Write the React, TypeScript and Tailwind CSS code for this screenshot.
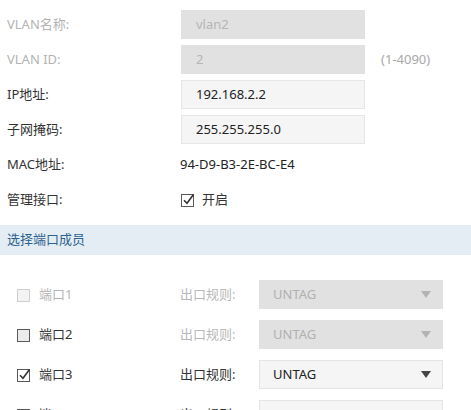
import React from 'react';

const font = { fontFamily: '"Noto Sans", "Noto Sans CJK SC", sans-serif' };

function Field({ label, value, disabled, hint }: { label: string; value: string; disabled?: boolean; hint?: string }) {
  return (
    <div className="flex items-center h-[29px]">
      <span className={`w-[181px] pl-[7px] ${disabled ? 'text-[#b3b3b3]' : 'text-[#333]'}`}>{label}</span>
      <div
        className={`w-[184px] h-[29px] flex items-center pl-[14px] border ${
          disabled ? 'bg-[#e1e1e1] border-[#e1e1e1] text-[#b5b5b5]' : 'bg-[#f5f5f5] border-[#e6e6e6] text-[#222]'
        }`}
      >
        {value}
      </div>
      {hint && <span className="ml-[16px] text-[#a8a8a8]">{hint}</span>}
    </div>
  );
}

function Box({ state }: { state: 'disabled' | 'off' | 'on' | 'full' }) {
  if (state === 'full') {
    return <span className="block w-[13px] h-[13px] mt-[1px] bg-[#666] border border-[#555]" />;
  }
  const stroke = state === 'disabled' ? '#cfcfcf' : '#5a5a5a';
  const fill = state === 'on' ? '#fff' : state === 'off' ? '#ececec' : '#f3f3f3';
  return (
    <svg width="14" height="14" viewBox="0 0 14 14" className="block">
      <rect x="0.5" y="1.5" width="12" height="12" fill={fill} stroke={stroke} />
      {state === 'on' && <path d="M3 7.2 L6 10.2 L12.5 1.5" fill="none" stroke="#333" strokeWidth="1.6" />}
    </svg>
  );
}

function Port({ name, state }: { name: string; state: 'disabled' | 'off' | 'on' | 'full' }) {
  const dis = state === 'disabled' || state === 'off';
  return (
    <div className="flex items-center h-[29px]">
      <div className="w-[180px] pl-[17px] flex items-center">
        <Box state={state} />
        <span className={`ml-[8px] ${state === 'disabled' ? 'text-[#b5b5b5]' : 'text-[#333]'}`}>{name}</span>
      </div>
      <span className={`w-[79px] ${dis ? 'text-[#b8b8b8]' : 'text-[#333]'}`}>出口规则:</span>
      <div
        className={`w-[184px] h-[29px] flex items-center justify-between pl-[13px] pr-[11px] border ${
          dis ? 'bg-[#e1e1e1] border-[#e1e1e1] text-[#b0b0b0]' : 'bg-[#f5f5f5] border-[#e4e4e4] text-[#222]'
        }`}
      >
        <span>UNTAG</span>
        <svg width="10" height="7" viewBox="0 0 10 7">
          <path d="M0 0 L10 0 L5 7 Z" fill={dis ? '#b3b3b3' : '#444'} />
        </svg>
      </div>
    </div>
  );
}

export default function App() {
  return (
    <div className="w-[471px] h-[410px] overflow-hidden bg-white text-[13px]" style={font}>
      <div className="pt-[10px] flex flex-col gap-[6px]">
        <Field label="VLAN名称:" value="vlan2" disabled />
        <Field label="VLAN ID:" value="2" disabled hint="(1-4090)" />
        <Field label="IP地址:" value="192.168.2.2" />
        <Field label="子网掩码:" value="255.255.255.0" />
        <div className="flex items-center h-[29px]">
          <span className="w-[180px] pl-[7px] text-[#333]">MAC地址:</span>
          <span className="text-[#222]">94-D9-B3-2E-BC-E4</span>
        </div>
        <div className="flex items-center h-[29px]">
          <span className="w-[181px] pl-[7px] text-[#333]">管理接口:</span>
          <span className="flex items-center">
            <Box state="on" />
            <span className="ml-[7px] text-[#333]">开启</span>
          </span>
        </div>
      </div>
      <div className="mt-[11px] h-[30px] bg-[#e3edf3] flex items-center pl-[7px] text-[#2d5f8f]">选择端口成员</div>
      <div className="mt-[25px] flex flex-col gap-[11px]">
        <Port name="端口1" state="disabled" />
        <Port name="端口2" state="off" />
        <Port name="端口3" state="on" />
        <Port name="端口4" state="full" />
      </div>
    </div>
  );
}
